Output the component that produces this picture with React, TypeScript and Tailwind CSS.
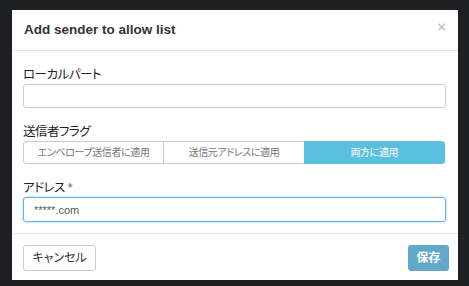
import { useState } from "react";

const font = { fontFamily: '"Liberation Sans", "Noto Sans CJK JP", sans-serif' };

const flags = ["エンベロープ送信者に適用", "送信元アドレスに適用", "両方に適用"];

export default function App() {
  const [flag, setFlag] = useState(2);
  const [local, setLocal] = useState("");
  const [address, setAddress] = useState("*****.com");

  return (
    <div
      className="w-[469px] h-[286px] bg-[#1f2023] pt-[10px] pl-[12px] overflow-hidden [font-feature-settings:'palt']"
      style={font}
    >
      <div className="w-[446px] h-[270px] bg-white flex flex-col">
        {/* Header */}
        <div className="h-[41px] border-b border-[#e5e5e5] flex items-center justify-between pl-[12px] pr-[12px]">
          <h4 className="text-[13.5px] font-bold text-[#333] pt-[1px]">Add sender to allow list</h4>
          <button className="text-[#c8c8c8] text-[15px] font-bold leading-none -mt-[8px]">×</button>
        </div>

        {/* Body */}
        <div className="flex-1 px-[11px] pt-[17px]">
          <label className="block text-[12.5px] tracking-[-0.5px] text-[#222] leading-[15px]">ローカルパート</label>
          <input
            value={local}
            onChange={(e) => setLocal(e.target.value)}
            className="mt-[1px] block w-[423px] h-[24px] border border-[#ccc] rounded-[3px] px-[10px] text-[12px] outline-none"
          />

          <label className="block mt-[17px] text-[12.5px] tracking-[-0.5px] text-[#222] leading-[15px]">送信者フラグ</label>
          <div className="mt-[1px] flex w-[422px] h-[23px]">
            {flags.map((f, i) => (
              <button
                key={i}
                onClick={() => setFlag(i)}
                className={`flex-1 text-[10px] tracking-[-0.4px] border ${
                  flag === i ? "bg-[#5bc0de] border-[#5bc0de] text-white" : "bg-white border-[#ccc] text-[#777]"
                } ${i === 0 ? "rounded-l-[3px]" : "-ml-px"} ${i === 2 ? "rounded-r-[3px]" : ""}`}
              >
                {f}
              </button>
            ))}
          </div>

          <label className="block mt-[17px] text-[12.5px] tracking-[-0.5px] text-[#222] leading-[15px]">
            アドレス<span className="text-[#a94442] ml-[3px]">*</span>
          </label>
          <input
            value={address}
            onChange={(e) => setAddress(e.target.value)}
            className="mt-[1px] block w-[423px] h-[25px] border border-[#66afe9] rounded-[3px] px-[10px] text-[11px] text-[#555] outline-none shadow-[0_0_3px_rgba(102,175,233,0.6)]"
          />
        </div>

        {/* Footer */}
        <div className="h-[47px] border-t border-[#e5e5e5] flex items-start justify-between pl-[11px] pr-[9px] pt-[11px]">
          <button className="h-[26px] w-[73px] border border-[#ccc] rounded-[3px] text-[12px] text-[#333] bg-white">キャンセル</button>
          <button className="h-[26px] w-[41px] rounded-[3px] text-[12px] font-bold text-white bg-[#62a8c9]">保存</button>
        </div>
      </div>
    </div>
  );
}
